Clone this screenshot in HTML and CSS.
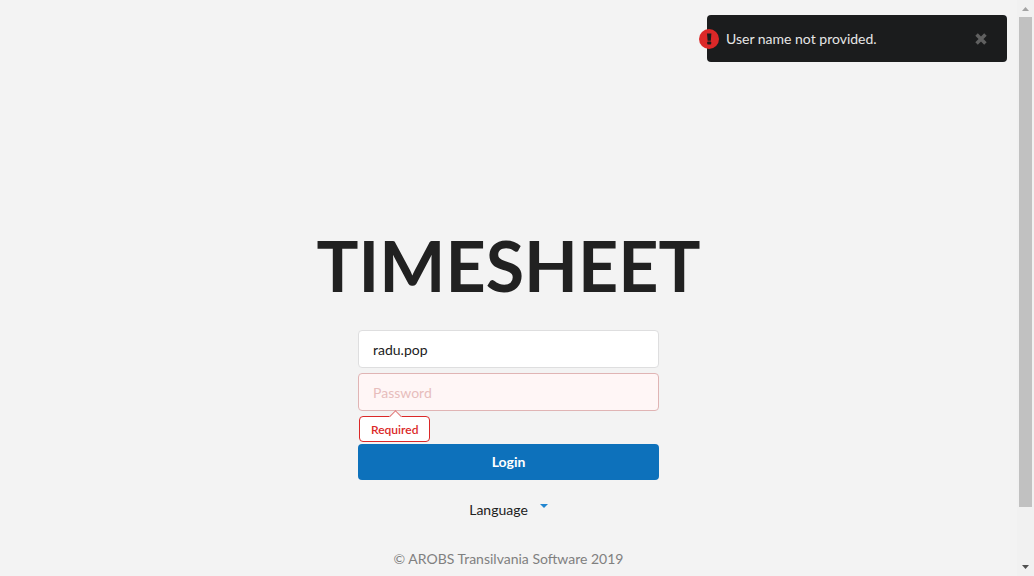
FILE: index.html
```html
<!DOCTYPE html>
<html lang="en">
<head>
<meta charset="utf-8">
<title>Timesheet</title>
<meta name="viewport" content="width=device-width, initial-scale=1">
<link rel="stylesheet" href="styles.css">
</head>
<body>
<div class="page">
  <main class="content">
    <h1 class="title">TIMESHEET</h1>
    <form class="login" novalidate>
      <input class="field" type="text" aria-label="User name" value="radu.pop">
      <input class="field field-error" id="password" type="password" aria-label="Password" placeholder="Password" aria-describedby="password-error">
      <div class="prompt" id="password-error">Required</div>
      <button class="submit" type="button">Login</button>
    </form>
    <button class="language" type="button" aria-haspopup="listbox">
      <span>Language</span>
      <svg class="caret" viewBox="0 0 8 4" aria-hidden="true"><path d="M0 0h8L4 4z"/></svg>
    </button>
    <footer class="copyright">© AROBS Transilvania Software 2019</footer>
  </main>
  <div class="scrollbar" aria-hidden="true">
    <svg class="arrow arrow-up" viewBox="0 0 7 4"><path d="M0 4L3.500 0 7 4z"/></svg>
    <div class="track"><div class="thumb"></div></div>
    <svg class="arrow arrow-down" viewBox="0 0 7 4"><path d="M0 0h7L3.500 4z"/></svg>
  </div>
</div>
<div class="toast" role="alert">
  <svg class="toast-icon" viewBox="0 0 20 20" aria-hidden="true">
    <circle cx="10" cy="10" r="10" fill="#db2828"/>
    <path d="M8 4.500h4.400l-.6 7.200H8.600z" fill="#1b1c1d"/>
    <rect x="8.200" y="12.500" width="4" height="3" rx=".8" fill="#1b1c1d"/>
  </svg>
  <span class="toast-text">User name not provided.</span>
  <button class="toast-close" type="button" aria-label="Close">
    <svg viewBox="0 0 12 12" aria-hidden="true"><path d="M2.200 2.200l7.600 7.600M9.800 2.200l-7.600 7.600"/></svg>
  </button>
</div>
</body>
</html>
```
FILE: styles.css
```css
* {
  box-sizing: border-box;
}

body {
  margin: 0;
  background: #f3f3f3;
  color: #212121;
  font: 14px/20px Lato, "Liberation Sans", sans-serif;
}

button,
input {
  font: inherit;
}

.page {
  display: flex;
  height: 100vh;
}

.content {
  flex: 1;
  display: flex;
  flex-direction: column;
  align-items: center;
  padding-top: 230px;
  overflow: hidden;
}

.title {
  margin: 0 0 30px;
  font-size: 70px;
  line-height: 70px;
  font-weight: 700;
}

.login {
  display: flex;
  flex-direction: column;
  width: 301px;
}

.field {
  width: 100%;
  height: 38px;
  padding: 0 14px;
  border: 1px solid #dededf;
  border-radius: 4px;
  background: #fff;
  color: #212121;
  outline: 0;
}

.field-error {
  margin-top: 5px;
  border-color: #e0b4b4;
  background: #fff6f6;
}

.field-error::placeholder {
  color: #e7bdbc;
  opacity: 1;
}

.prompt {
  position: relative;
  align-self: flex-start;
  margin: 5px 0 2px 1px;
  padding: 2px 11px 0;
  border: 1px solid #db2828;
  border-radius: 4px;
  background: #fff;
  color: #db2828;
  font-size: 12px;
  line-height: 22px;
  font-weight: 600;
}

.prompt::before {
  content: "";
  position: absolute;
  top: -5px;
  left: 50%;
  width: 8px;
  height: 8px;
  margin-left: -4px;
  border: 1px solid #e07070;
  border-width: 1px 0 0 1px;
  background: #fff;
  transform: rotate(45deg);
}

.submit {
  height: 36px;
  padding: 0;
  border: 0;
  border-radius: 4px;
  background: #0d71bb;
  color: #fff;
  font-weight: 700;
}

.language {
  display: flex;
  gap: 12px;
  margin-top: 20px;
  padding: 0;
  border: 0;
  background: none;
  color: #212121;
}

.caret {
  width: 8px;
  height: 4px;
  margin-top: 4px;
  fill: #2185d0;
}

.copyright {
  margin-top: 29px;
  color: #808080;
}

.scrollbar {
  display: flex;
  flex-direction: column;
  align-items: center;
  width: 17px;
  background: #f1f1f1;
}

.arrow {
  width: 7px;
  height: 4px;
}

.arrow-up {
  margin: 7px 0 6px;
  fill: #a3a3a3;
}

.arrow-down {
  margin: 6px 0 7px;
  fill: #505050;
}

.track {
  flex: 1;
  width: 13px;
}

.thumb {
  height: 90.4%;
  background: #c1c1c1;
}

.toast {
  position: absolute;
  top: 15px;
  right: 27px;
  display: flex;
  align-items: center;
  width: 300px;
  height: 47px;
  padding-right: 19px;
  border-radius: 4px;
  background: #1b1c1d;
  color: #e6e6e6;
}

.toast-icon {
  width: 20px;
  height: 20px;
  margin-left: -8px;
}

.toast-text {
  flex: 1;
  margin-left: 7px;
}

.toast-close {
  display: flex;
  padding: 0;
  border: 0;
  background: none;
}

.toast-close svg {
  width: 14px;
  height: 14px;
  stroke: #606060;
  stroke-width: 3;
}
```
